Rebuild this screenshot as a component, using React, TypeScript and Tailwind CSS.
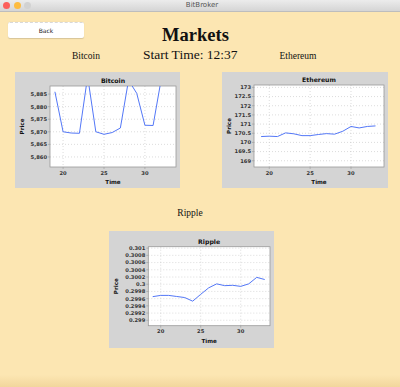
type Tick = { v: number; l: string };

type ChartProps = {
  id: string;
  title: string;
  w: number;
  h: number;
  plot: { x: number; y: number; w: number; h: number };
  xr: [number, number];
  yr: [number, number];
  xTicks: number[];
  yTicks: Tick[];
  data: [number, number][];
  priceX: number;
  className: string;
};

const bitcoin: [number, number][] = [
  [19, 5885.9], [20, 5870], [21, 5869.5], [22, 5869.4], [23, 5892], [24, 5870],
  [25, 5869], [26, 5869.7], [27, 5871.5], [28, 5890.5], [29, 5885.3], [30, 5872.6],
  [31, 5872.5], [32, 5891],
];

const ethereum: [number, number][] = [
  [19, 170.32], [20, 170.34], [21, 170.32], [22, 170.52], [23, 170.47], [24, 170.37],
  [25, 170.37], [26, 170.43], [27, 170.48], [28, 170.45], [29, 170.61], [30, 170.87],
  [31, 170.79], [32, 170.87], [33, 170.9],
];

const ripple: [number, number][] = [
  [19, 0.299655], [20, 0.29969], [21, 0.29969], [22, 0.29966], [23, 0.29963], [24, 0.29953],
  [25, 0.29972], [26, 0.2999], [27, 0.30001], [28, 0.29996], [29, 0.29997], [30, 0.29994],
  [31, 0.30001], [32, 0.30019], [33, 0.30013],
];

function Chart({ id, title, w, h, plot, xr, yr, xTicks, yTicks, data, priceX, className }: ChartProps) {
  const sx = (t: number) => plot.x + ((t - xr[0]) / (xr[1] - xr[0])) * plot.w;
  const sy = (v: number) => plot.y + plot.h - ((v - yr[0]) / (yr[1] - yr[0])) * plot.h;
  const bottom = plot.y + plot.h;
  const cx = plot.x + plot.w / 2;
  const points = data.map(([t, v]) => `${sx(t).toFixed(2)},${sy(v).toFixed(2)}`).join(" ");

  return (
    <div className={`bg-[#d4d4d4] shrink-0 ${className}`}>
      <svg width={w} height={h} viewBox={`0 0 ${w} ${h}`} fontFamily="'DejaVu Sans', sans-serif">
        <defs>
          <clipPath id={id}>
            <rect x={plot.x} y={plot.y} width={plot.w} height={plot.h} />
          </clipPath>
        </defs>
        <text x={cx} y={plot.y - 3} fontSize="6.2" fontWeight="bold" fill="#111" textAnchor="middle">
          {title}
        </text>
        <rect x={plot.x} y={plot.y} width={plot.w} height={plot.h} fill="#ffffff" />
        {yTicks.map((t) => (
          <g key={t.l}>
            <line x1={plot.x} x2={plot.x + plot.w} y1={sy(t.v)} y2={sy(t.v)} stroke="#c4c4c4" strokeWidth="0.6" strokeDasharray="1 2" />
            <line x1={plot.x - 2} x2={plot.x} y1={sy(t.v)} y2={sy(t.v)} stroke="#8a8a8a" strokeWidth="0.5" />
            <text x={plot.x - 3} y={sy(t.v) + 1.9} fontSize="5.2" fontWeight="bold" fill="#333" textAnchor="end">
              {t.l}
            </text>
          </g>
        ))}
        {xTicks.map((t) => (
          <g key={t}>
            <line x1={sx(t)} x2={sx(t)} y1={plot.y} y2={bottom} stroke="#c4c4c4" strokeWidth="0.6" strokeDasharray="1 2" />
            <line x1={sx(t)} x2={sx(t)} y1={bottom} y2={bottom + 2} stroke="#8a8a8a" strokeWidth="0.5" />
            <text x={sx(t)} y={bottom + 7.5} fontSize="5.2" fontWeight="bold" fill="#333" textAnchor="middle">
              {t}
            </text>
          </g>
        ))}
        <rect x={plot.x} y={plot.y} width={plot.w} height={plot.h} fill="none" stroke="#9a9a9a" strokeWidth="0.8" />
        <polyline points={points} fill="none" stroke="#5377f7" strokeWidth="1" clipPath={`url(#${id})`} strokeLinejoin="round" />
        <text x={cx} y={bottom + 17} fontSize="5.6" fontWeight="bold" fill="#111" textAnchor="middle">
          Time
        </text>
        <text
          x={0}
          y={0}
          fontSize="5.6"
          fontWeight="bold"
          fill="#111"
          textAnchor="middle"
          transform={`translate(${priceX + 2} ${plot.y + plot.h / 2}) rotate(-90)`}
        >
          Price
        </text>
      </svg>
    </div>
  );
}

function range(from: number, to: number, step: number, fmt: (v: number) => string): Tick[] {
  const out: Tick[] = [];
  const n = Math.round((to - from) / step);
  for (let i = 0; i <= n; i++) {
    const v = from + i * step;
    out.push({ v, l: fmt(v) });
  }
  return out;
}

export default function App() {
  const btcTicks = range(5860, 5885, 5, (v) => v.toLocaleString("en-US"));
  const ethTicks = range(169, 173, 0.5, (v) => String(+v.toFixed(1)));
  const xrpTicks = range(0.299, 0.301, 0.0002, (v) => String(+v.toFixed(4)));

  return (
    <div className="w-[400px] h-[387px] flex flex-col bg-[#fce6b2] overflow-hidden font-['Liberation_Serif',serif] text-[#111]">
      {/* window title bar */}
      <div className="h-3 shrink-0 flex items-center bg-gradient-to-b from-[#ececec] to-[#d5d5d5] border-b border-[#bdbdbd]">
        <div className="flex items-center gap-[3.5px] pl-[3px]">
          <span className="w-[7px] h-[7px] rounded-full bg-[#fc605c]" />
          <span className="w-[7px] h-[7px] rounded-full bg-[#fdbc40]" />
          <span className="w-[7px] h-[7px] rounded-full bg-[#d2d2d2]" />
        </div>
        <div className="flex-1 text-center pr-[27px] text-[7px] leading-none text-[#555] font-['DejaVu_Sans',sans-serif]">
          BitBroker
        </div>
      </div>

      {/* header */}
      <div className="grid grid-cols-[1fr_auto_1fr] pr-[9px]">
        <div className="pl-2 pt-[4px]">
          <button className="w-[76px] h-4 bg-white rounded-[2px] border-t border-dashed border-[#d8d8d8] shadow-[0_0.5px_1px_rgba(0,0,0,0.15)] text-[6px] text-[#222] font-['DejaVu_Sans',sans-serif]">
            Back
          </button>
        </div>
        <h1 className="pt-[14px] text-[18.5px] font-bold leading-none">Markets</h1>
        <div />
      </div>

      <div className="flex items-baseline mt-[3px] pl-[72px] leading-none">
        <span className="text-[9.5px]">Bitcoin</span>
        <span className="ml-[43px] text-[13.5px]">Start Time: 12:37</span>
        <span className="ml-[42px] text-[9.5px]">Ethereum</span>
      </div>

      {/* top charts */}
      <div className="flex gap-[42px] pl-[15px] mt-[11px]">
        <Chart
          id="btc"
          title="Bitcoin"
          w={165}
          h={116}
          className="w-[165px] h-[116px]"
          plot={{ x: 35, y: 14, w: 126, h: 81 }}
          xr={[18.4, 33.8]}
          yr={[5856, 5888.2]}
          xTicks={[20, 25, 30]}
          yTicks={btcTicks}
          data={bitcoin}
          priceX={7.3}
        />
        <Chart
          id="eth"
          title="Ethereum"
          w={166}
          h={116}
          className="w-[166px] h-[116px]"
          plot={{ x: 32, y: 13, w: 130, h: 82 }}
          xr={[18.13, 34.04]}
          yr={[168.66, 173.13]}
          xTicks={[20, 25, 30]}
          yTicks={ethTicks}
          data={ethereum}
          priceX={7}
        />
      </div>

      <div className="mt-[21px] pr-[20px] text-center text-[9.5px] leading-none">Ripple</div>

      <div className="pl-[109px] mt-[12.5px]">
        <Chart
          id="xrp"
          title="Ripple"
          w={165}
          h={117}
          className="w-[165px] h-[117px]"
          plot={{ x: 39.3, y: 15.7, w: 121.7, h: 79 }}
          xr={[18.45, 33.66]}
          yr={[0.29885, 0.30104]}
          xTicks={[20, 25, 30]}
          yTicks={xrpTicks}
          data={ripple}
          priceX={7}
        />
      </div>

      {/* window bottom edge */}
      <div className="mt-auto h-[12px] bg-gradient-to-b from-[#fce6b2] to-[#f2d69c]" />
    </div>
  );
}
